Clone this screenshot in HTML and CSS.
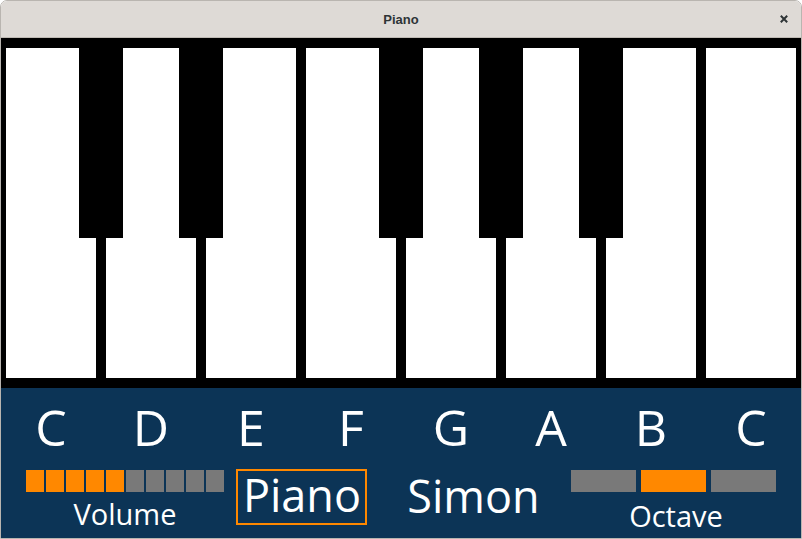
FILE: index.html
```html
<!DOCTYPE html>
<html>
<head>
<meta charset="utf-8">
<title>Piano</title>
<link rel="stylesheet" href="styles.css">
</head>
<body>
<div class="window">
  <div class="titlebar">
    <span class="title">Piano</span>
    <span class="close" aria-label="Close">
      <svg width="8" height="8" viewBox="0 0 8 8"><path d="M0.8 0.8 L7.2 7.2 M7.2 0.8 L0.8 7.2" stroke="#2e3436" stroke-width="2" fill="none"/></svg>
    </span>
  </div>
  <div class="keyboard">
    <div class="white-keys">
      <div class="wkey"><div class="bkey"></div></div>
      <div class="wkey"><div class="bkey"></div></div>
      <div class="wkey"></div>
      <div class="wkey"><div class="bkey"></div></div>
      <div class="wkey"><div class="bkey"></div></div>
      <div class="wkey"><div class="bkey"></div></div>
      <div class="wkey"></div>
      <div class="wkey"></div>
    </div>
  </div>
  <div class="panel">
    <div class="notes">
      <span>C</span><span>D</span><span>E</span><span>F</span>
      <span>G</span><span>A</span><span>B</span><span>C</span>
    </div>
    <div class="controls">
      <div class="volume">
        <div class="vbar">
          <i class="seg on"></i><i class="seg on"></i><i class="seg on"></i><i class="seg on"></i><i class="seg on"></i>
          <i class="seg"></i><i class="seg"></i><i class="seg"></i><i class="seg"></i><i class="seg"></i>
        </div>
        <div class="label vlabel">Volume</div>
      </div>
      <div class="mode active">Piano</div>
      <div class="mode simon">Simon</div>
      <div class="octave">
        <div class="obar">
          <i class="oseg"></i><i class="oseg on"></i><i class="oseg"></i>
        </div>
        <div class="label olabel">Octave</div>
      </div>
    </div>
  </div>
</div>
</body>
</html>
```

FILE: styles.css
```css
html, body {
  margin: 0;
  padding: 0;
  background: #ffffff;
}

.window {
  width: 802px;
  height: 539px;
  box-sizing: border-box;
  border: 1px solid #b9b5b0;
  border-radius: 7px 7px 0 0;
  overflow: hidden;
  display: flex;
  flex-direction: column;
}

.titlebar {
  height: 37px;
  box-sizing: border-box;
  border-bottom: 1px solid #bfbab4;
  background: #dedad6;
  position: relative;
  display: flex;
  align-items: center;
  justify-content: center;
}

.title {
  font-family: "Liberation Sans", Arial, sans-serif;
  font-weight: bold;
  font-size: 13px;
  color: #2e3436;
  margin-top: 1px;
}

.close {
  position: absolute;
  right: 13px;
  top: 14px;
  width: 8px;
  height: 8px;
  display: block;
}
.close svg { display: block; }

.keyboard {
  height: 350px;
  box-sizing: border-box;
  background: #000000;
  padding: 10px 5px;
}

.white-keys {
  display: grid;
  grid-template-columns: repeat(8, 90px);
  column-gap: 10px;
  height: 330px;
}

.wkey {
  background: #ffffff;
  position: relative;
}

.bkey {
  position: absolute;
  top: -10px;
  left: 73px;
  width: 44px;
  height: 200px;
  background: #000000;
  z-index: 2;
}

.panel {
  height: 150px;
  background: #0c3456;
  color: #ffffff;
  font-family: "Open Sans", "Noto Sans", sans-serif;
}

.notes {
  display: grid;
  grid-template-columns: repeat(8, 90px);
  column-gap: 10px;
  padding: 9px 5px 0 5px;
  font-size: 50px;
  line-height: 60px;
  text-align: center;
}

.controls {
  display: flex;
  align-items: flex-start;
  padding-left: 25px;
}

.volume {
  width: 198px;
  margin-top: 13px;
  display: flex;
  flex-direction: column;
  align-items: center;
}

.vbar {
  display: flex;
  gap: 2px;
  height: 22px;
}

.seg {
  width: 18px;
  height: 22px;
  background: #797979;
}

.seg.on, .oseg.on {
  background: #ff8800;
}

.label {
  font-size: 29px;
  line-height: 34px;
}

.vlabel { margin-top: 5px; }

.mode {
  font-size: 45px;
  line-height: 47px;
}

.mode.active {
  box-sizing: border-box;
  width: 131px;
  height: 56px;
  border: 2px solid #ff8800;
  margin-top: 12px;
  margin-left: 12px;
  text-align: center;
  padding-left: 1px;
}

.mode.simon {
  box-sizing: border-box;
  width: 204px;
  margin-top: 15px;
  padding-left: 9px;
  text-align: center;
}

.octave {
  width: 205px;
  margin-top: 13px;
  display: flex;
  flex-direction: column;
  align-items: center;
}

.obar {
  display: flex;
  gap: 5px;
  height: 22px;
}

.oseg {
  width: 65px;
  height: 22px;
  background: #797979;
}

.olabel {
  margin-top: 7px;
  padding-left: 5px;
}
```
